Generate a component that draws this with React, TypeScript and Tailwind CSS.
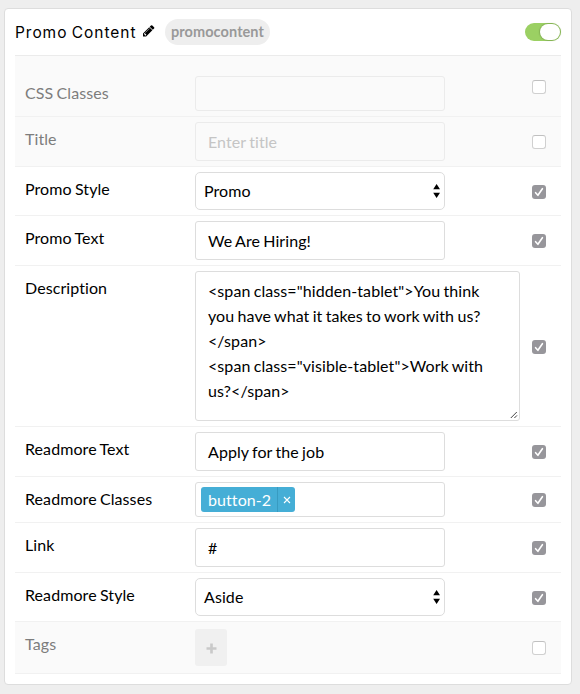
import type { ReactNode } from "react";

function Check({ on, className }: { on?: boolean; className: string }) {
  return (
    <span
      role="checkbox"
      aria-checked={!!on}
      className={`ml-auto mr-[15px] block size-[14px] shrink-0 rounded-[3px] ${
        on ? "bg-[#97969b]" : "border border-[#d0d0d0] border-t-[#c0c0c0] bg-white"
      } ${className}`}
    >
      {on && (
        <svg viewBox="0 0 14 14" className="size-[14px]" fill="none" stroke="#fff" strokeWidth="1.6" strokeLinecap="round" strokeLinejoin="round">
          <path d="M3.6 7.7 L5.9 10.3 L10.4 3.7" />
        </svg>
      )}
    </span>
  );
}

type RowProps = {
  label: string;
  height: string;
  pad?: string;
  labelPad?: string;
  check?: string;
  off?: boolean;
  children: ReactNode;
};

function Row({ label, height, pad = "pt-[5px]", labelPad = "pt-[9px]", check = "mt-[18px]", off, children }: RowProps) {
  return (
    <div className={`flex items-start border-b border-[#f1f1f1] ${height} ${off ? "bg-[#fafafa]" : ""}`}>
      <div className={`w-[180px] shrink-0 pl-[10px] leading-[25px] ${labelPad} ${off ? "text-[#7d7d7d]" : "text-black"}`}>
        {label}
      </div>
      <div className={pad}>{children}</div>
      <Check on={!off} className={check} />
    </div>
  );
}

function Field({ text, className = "border-[#dddddd] bg-white" }: { text: string; className?: string }) {
  return <div className={`flex h-[39px] w-[250px] items-center rounded-[3px] border pb-px pl-3 ${className}`}>{text}</div>;
}

function Select({ text }: { text: string }) {
  return (
    <div className="flex h-[38px] w-[250px] items-center justify-between rounded-[5px] border border-[#dddddd] bg-white pb-px pl-2 pr-1">
      <span>{text}</span>
      <svg viewBox="0 0 8 14" className="-mr-px mt-px h-[14px] w-2">
        <path d="M3.6 0 L7 5.2 H0.2 Z M3.6 14 L0.2 8.8 H7 Z" />
      </svg>
    </div>
  );
}

export default function App() {
  return (
    <div className="h-[694px] w-[580px] bg-[#eeeeee] pl-1 pt-2 font-['Lato','Liberation_Sans',sans-serif] text-[16px] leading-[25px] tracking-[0.08px] text-black [word-spacing:-0.9px]">
      <section className="h-[677px] w-[568px] rounded-[4px] border border-[#dddddd] bg-white px-[10px]">
        <header className="flex h-[47px] items-center border-b border-[#ebebeb]">
          <h2 className="w-[122px] whitespace-nowrap font-['Inter',sans-serif] text-[15.5px] font-normal tracking-[0.95px]">
            Promo Content
          </h2>
          <svg viewBox="0 0 1536 1536" className="ml-[6px] size-[11.5px] shrink-0 -translate-y-px">
            <path d="M363 1408l91-91-235-235-91 91v107h128v128h107zM886 480q0-22-22-22-10 0-17 7l-542 542q-7 7-7 17 0 22 22 22 10 0 17-7l542-542q7-7 7-17zM832 288l416 416-832 832H0v-416zM1515 384q0 53-37 90l-166 166-416-416 166-165q36-38 90-38 53 0 91 38l235 234q37 39 37 91z" />
          </svg>
          <span className="ml-[10.5px] flex h-[26px] w-[105px] items-center justify-center rounded-full bg-[#eeeeee] pb-px text-[14.5px] font-bold text-[#999999]">
            promocontent
          </span>
          <span className="ml-auto flex h-[18px] w-9 justify-end rounded-full bg-[#9bd063] p-px">
            <span className="h-4 w-5 rounded-full bg-white shadow-[0_0_1px_1px_rgba(80,110,50,0.3)]" />
          </span>
        </header>

        <Row label="CSS Classes" height="h-[61px]" pad="pt-5" labelPad="pt-6" check="mt-6" off>
          <div className="h-[35px] w-[250px] rounded-[3px] border border-[#ebebeb]" />
        </Row>
        <Row label="Title" height="h-[50px]" off>
          <Field text="Enter title" className="border-[#ebebeb] text-[#c5c5c5]" />
        </Row>
        <Row label="Promo Style" height="h-[49px]">
          <Select text="Promo" />
        </Row>
        <Row label="Promo Text" height="h-[50px]">
          <Field text="We Are Hiring!" />
        </Row>
        <Row label="Description" height="h-[161px]" check="mt-[74px]">
          <div className="relative h-[150px] w-[325px] whitespace-nowrap rounded-[3px] border border-[#dddddd] pl-3 pt-[6px]">
            <div>{'<span class="hidden-tablet">You think'}</div>
            <div>you have what it takes to work with us?</div>
            <div>{"</span>"}</div>
            <div>{'<span class="visible-tablet">Work with'}</div>
            <div>{"us?</span>"}</div>
            <svg viewBox="0 0 8 8" className="absolute bottom-px right-px size-2" fill="none" stroke="#444" strokeWidth="1">
              <path d="M0.8 7 L6.8 1 M4.4 7 L7 4.4" />
            </svg>
          </div>
        </Row>
        <Row label="Readmore Text" height="h-[50px]">
          <Field text="Apply for the job" />
        </Row>
        <Row label="Readmore Classes" height="h-[46px]" check="mt-4">
          <div className="flex h-[35px] w-[250px] items-start rounded-[3px] border border-[#dddddd] pl-[5px] pt-1">
            <div className="flex h-[25px] w-[94px] rounded-[3px] bg-[#45aed6] text-white">
              <span className="w-[76px] pl-[7px]">button-2</span>
              <span className="flex flex-1 items-center justify-center border-l border-[#389bc1]">
                <svg viewBox="0 0 8 8" className="mt-px size-2" fill="none" stroke="#fff" strokeWidth="1.1">
                  <path d="M1 1 L7 7 M7 1 L1 7" />
                </svg>
              </span>
            </div>
          </div>
        </Row>
        <Row label="Link" height="h-[50px]">
          <Field text="#" />
        </Row>
        <Row label="Readmore Style" height="h-[49px]">
          <Select text="Aside" />
        </Row>
        <Row label="Tags" height="h-[52px]" pad="pt-[7px]" check="mt-[19px]" off>
          <div className="flex h-[37px] w-8 items-center justify-center rounded-[3px] bg-[#f0f0f0]">
            <svg viewBox="0 0 11 11" className="mt-px size-[11px]" fill="#c9c9c9">
              <path d="M4.2 0.5h2.6v3.7h3.7v2.6H6.8v3.7H4.2V6.8H0.5V4.2h3.7z" />
            </svg>
          </div>
        </Row>
      </section>
    </div>
  );
}
